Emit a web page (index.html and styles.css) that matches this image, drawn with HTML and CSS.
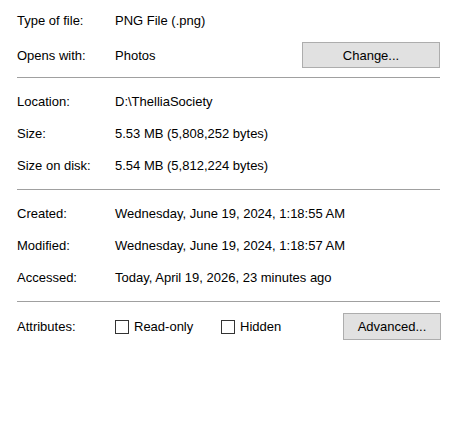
FILE: index.html
```html
<!DOCTYPE html>
<html>
<head>
<meta charset="utf-8">
<link rel="stylesheet" href="styles.css">
</head>
<body>
<div class="panel">
  <div class="section first">
    <div class="row"><span class="label">Type of file:</span><span class="value">PNG File (.png)</span></div>
    <div class="row tall"><span class="label">Opens with:</span><span class="value">Photos</span><button class="btn change">Change...</button></div>
  </div>
  <div class="sep"></div>
  <div class="section">
    <div class="row"><span class="label">Location:</span><span class="value">D:\ThelliaSociety</span></div>
    <div class="row"><span class="label">Size:</span><span class="value">5.53 MB (5,808,252 bytes)</span></div>
    <div class="row"><span class="label">Size on disk:</span><span class="value">5.54 MB (5,812,224 bytes)</span></div>
  </div>
  <div class="sep"></div>
  <div class="section">
    <div class="row"><span class="label">Created:</span><span class="value">Wednesday, June 19, 2024, 1:18:55 AM</span></div>
    <div class="row"><span class="label">Modified:</span><span class="value">Wednesday, June 19, 2024, 1:18:57 AM</span></div>
    <div class="row"><span class="label">Accessed:</span><span class="value">Today, April 19, 2026, 23 minutes ago</span></div>
  </div>
  <div class="sep"></div>
  <div class="section last">
    <div class="row attrs">
      <span class="label">Attributes:</span>
      <label class="check first-check"><span class="box"></span>Read-only</label>
      <label class="check"><span class="box"></span>Hidden</label>
      <button class="btn advanced">Advanced...</button>
    </div>
  </div>
</div>
</body>
</html>
```
FILE: styles.css
```css
html, body {
  margin: 0;
  background: #ffffff;
}
body {
  font-family: "Liberation Sans", Arial, sans-serif;
  font-size: 13px;
  color: #000000;
}
.panel {
  width: 424px;
  margin-left: 17px;
}
.section {
  padding: 7px 0 8px;
}
.section.first {
  padding: 4px 0 3px;
}
.section.last {
  padding: 11px 0 0;
}
.sep {
  width: 423px;
  height: 1px;
  background: #a0a0a0;
}
.row {
  display: flex;
  align-items: center;
  height: 32px;
}
.row.tall {
  height: 38px;
}
.row.attrs {
  height: 27px;
}
.label {
  width: 98px;
  flex: none;
}
.value {
  white-space: nowrap;
}
.btn {
  margin-left: auto;
  box-sizing: border-box;
  background: #e1e1e1;
  border: 1px solid #adadad;
  border-radius: 0;
  font-family: "Liberation Sans", Arial, sans-serif;
  font-size: 13px;
  color: #000000;
  padding: 0;
}
.btn.change {
  width: 138px;
  height: 26px;
  margin-right: 1px;
}
.btn.advanced {
  width: 98px;
  height: 27px;
}
.check {
  display: flex;
  align-items: center;
  gap: 5px;
}
.check.first-check {
  width: 106px;
}
.box {
  box-sizing: border-box;
  width: 14px;
  height: 14px;
  border: 1px solid #333333;
  background: #ffffff;
}
```
